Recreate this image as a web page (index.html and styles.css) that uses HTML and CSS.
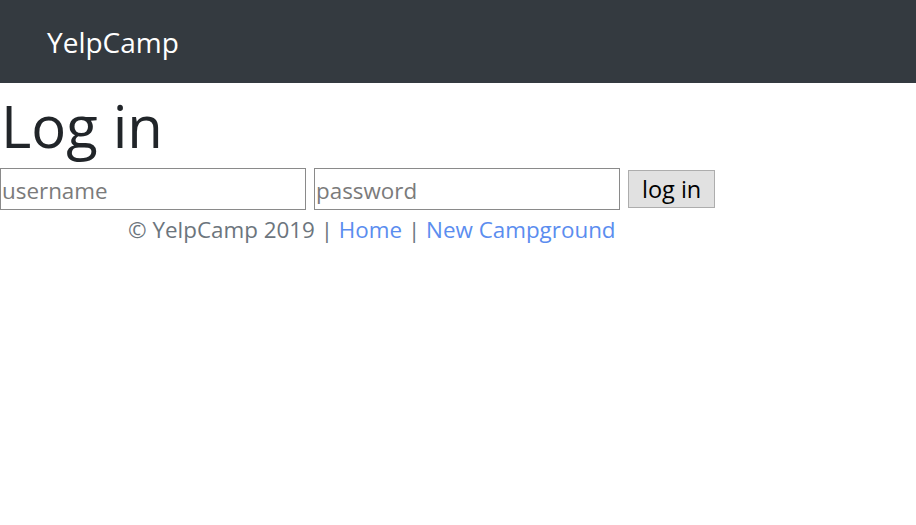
FILE: index.html
```html
<!DOCTYPE html>
<html>
<head>
<meta charset="utf-8">
<link rel="stylesheet" href="styles.css">
</head>
<body>
<nav class="navbar">
  <a class="brand" href="#">YelpCamp</a>
</nav>
<main class="content">
  <h1 class="title">Log in</h1>
  <form class="login-form">
    <input class="field" type="text" placeholder="username">
    <input class="field" type="password" placeholder="password">
    <button class="submit" type="button">log in</button>
  </form>
  <footer class="footer">
    <span>© YelpCamp 2019 | </span><a class="link" href="#">Home</a><span> | </span><a class="link" href="#">New Campground</a>
  </footer>
</main>
</body>
</html>
```

FILE: styles.css
```css
* { box-sizing: border-box; }
body {
  margin: 0;
  font-family: "Open Sans", "Noto Sans", sans-serif;
  color: #212529;
  background: #fff;
}
.navbar {
  height: 83px;
  background: #343a40;
  display: flex;
  align-items: center;
  padding: 0 47px;
}
.brand {
  color: #fff;
  text-decoration: none;
  font-size: 28px;
  margin-top: 1px;
}
.title {
  margin: 0;
  font-weight: 400;
  font-size: 58px;
  line-height: 85px;
  height: 85px;
  padding-left: 1px;
}
.login-form {
  display: flex;
  align-items: center;
  gap: 8px;
  height: 42px;
}
.field {
  width: 306px;
  height: 42px;
  margin: 0;
  border: 1px solid #8a8a8a;
  font-family: inherit;
  font-size: 22.4px;
  padding: 2px 1px 0;
  color: #212529;
}
.field::placeholder { color: #7b7b7b; }
.submit {
  height: 38px;
  margin: 0;
  padding: 0 13px;
  background: #e1e1e1;
  border: 1px solid #adadad;
  font-family: inherit;
  font-size: 23.5px;
  color: #000;
}
.footer {
  color: #6c757d;
  font-size: 22.4px;
  padding-left: 128px;
  padding-top: 4px;
  line-height: 32px;
}
.link {
  color: #5b8def;
  text-decoration: none;
}
```
